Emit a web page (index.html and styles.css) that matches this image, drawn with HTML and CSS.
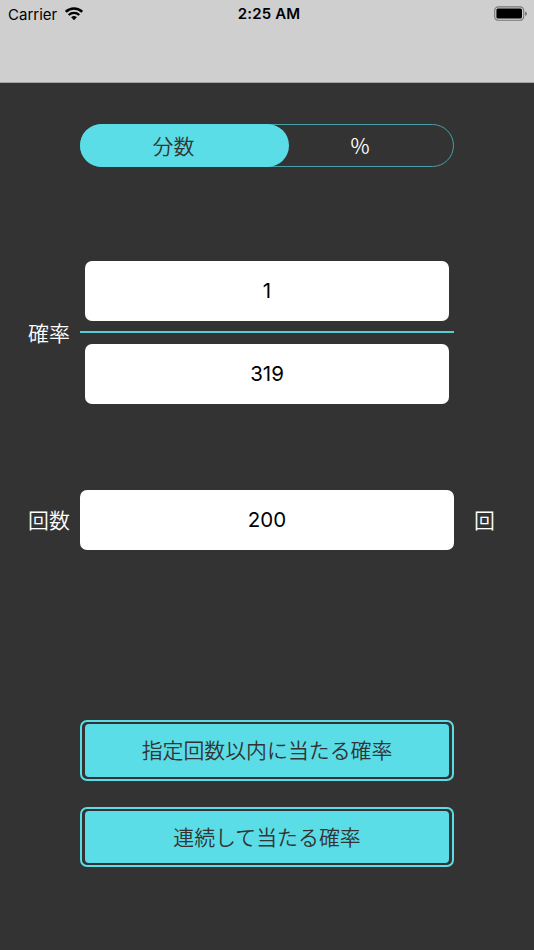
FILE: index.html
```html
<!DOCTYPE html>
<html lang="ja">
<head>
  <meta charset="UTF-8">
  <meta name="viewport" content="width=device-width, initial-scale=1.0">
  <title>確率計算</title>
  <link rel="stylesheet" href="styles.css">
</head>
<body>
  <header class="navbar">
    <div class="status">
      <div class="carrier">
        <span>Carrier</span>
        <svg class="wifi" width="18" height="14" viewBox="0 0 18 14">
          <path d="M.8 4.8C5.4 .3 12.6 .3 17.2 4.8" fill="none" stroke="#000" stroke-width="2.6"/>
          <path d="M3.7 8C6.7 5.2 11.3 5.2 14.3 8" fill="none" stroke="#000" stroke-width="2.3"/>
          <path d="M6.1 10.3C7.8 8.7 10.2 8.7 11.9 10.3L9 13.2Z"/>
        </svg>
      </div>
      <div class="time">2:25 AM</div>
      <svg class="battery" width="34" height="16" viewBox="0 0 34 16">
        <rect x=".7" y=".9" width="29" height="13.4" rx="3.6" fill="none" stroke="#777" stroke-width="1.1"/>
        <rect x="2.4" y="2.6" width="25.6" height="10" rx="1.5"/>
        <path d="M31.2 5.4C33.4 6.2 33.4 9 31.2 9.8Z" fill="#666"/>
      </svg>
    </div>
  </header>

  <main class="content">
    <div class="segment">
      <div class="segment-item active">分数</div>
      <div class="segment-item percent">%</div>
    </div>

    <div class="row probability">
      <div class="label">確率</div>
      <div class="fraction">
        <div class="field">1</div>
        <div class="line"></div>
        <div class="field">319</div>
      </div>
    </div>

    <div class="row count">
      <div class="label">回数</div>
      <div class="field">200</div>
      <div class="unit">回</div>
    </div>

    <div class="buttons">
      <button class="btn"><span>指定回数以内に当たる確率</span></button>
      <button class="btn"><span>連続して当たる確率</span></button>
    </div>
  </main>
</body>
</html>
```

FILE: styles.css
```css
* { box-sizing: border-box; }
body {
  margin: 0;
  min-height: 950px;
  background: #333;
  color: #fff;
  font-family: Inter, "Noto Sans CJK JP", sans-serif;
  font-size: 20.9px;
  font-weight: 350;
}
.navbar {
  height: 83px;
  background: #cfcfcf;
  border-bottom: 1px solid #a6a6a6;
  color: #000;
}
.status {
  display: grid;
  grid-template-columns: 1fr auto 1fr;
  align-items: center;
  height: 27px;
  padding: 0 6px 0 8px;
  font-size: 15px;
  font-weight: 400;
}
.carrier { display: flex; align-items: center; gap: 8px; padding-top: 1px; }
.wifi { margin-top: -1px; }
.time { padding-left: 2px; font-weight: 600; letter-spacing: 0.15px; }
.battery { justify-self: end; }
.content { padding: 41px 80px 0; }
.segment {
  display: flex;
  height: 43px;
  border: 1px solid #48a0a7;
  border-radius: 22px;
}
.segment-item {
  flex: 1;
  display: flex;
  align-items: center;
  justify-content: center;
}
.segment-item.active {
  flex: 0 0 209px;
  margin: -1px -22px -1px -1px;
  padding: 0 22px 2px 0;
  border-radius: 22px;
  background: #5adde6;
  color: #333;
}
.segment-item.percent {
  padding-bottom: 1px;
  font-family: "Noto Sans CJK JP", sans-serif;
}
.row {
  display: grid;
  grid-template-columns: 52px 374px 52px;
  align-items: center;
  margin: 0 -52px;
}
.label, .unit { padding-bottom: 3px; }
.probability { margin-top: 94px; }
.probability .label { padding-bottom: 1px; }
.fraction .field { margin: 0 5px; }
.field {
  height: 60px;
  border-radius: 7px;
  background: #fff;
  color: #000;
  font-size: 20.5px;
  font-weight: 400;
  line-height: 59px;
  text-align: center;
}
.line { height: 2px; margin: 10px 0 11px; background: #55cdd5; }
.count { margin-top: 86px; }
.unit { padding-left: 20px; }
.buttons { display: grid; gap: 26px; margin-top: 170px; }
.btn {
  display: block;
  width: 100%;
  height: 60.5px;
  padding: 2px 3px;
  border: 2px solid #5adde6;
  border-radius: 7px;
  background: #333;
  color: #333;
  font: inherit;
}
.btn span {
  display: flex;
  align-items: center;
  justify-content: center;
  height: 100%;
  padding-bottom: 2px;
  border-radius: 4px;
  background: #5adde6;
}
```
